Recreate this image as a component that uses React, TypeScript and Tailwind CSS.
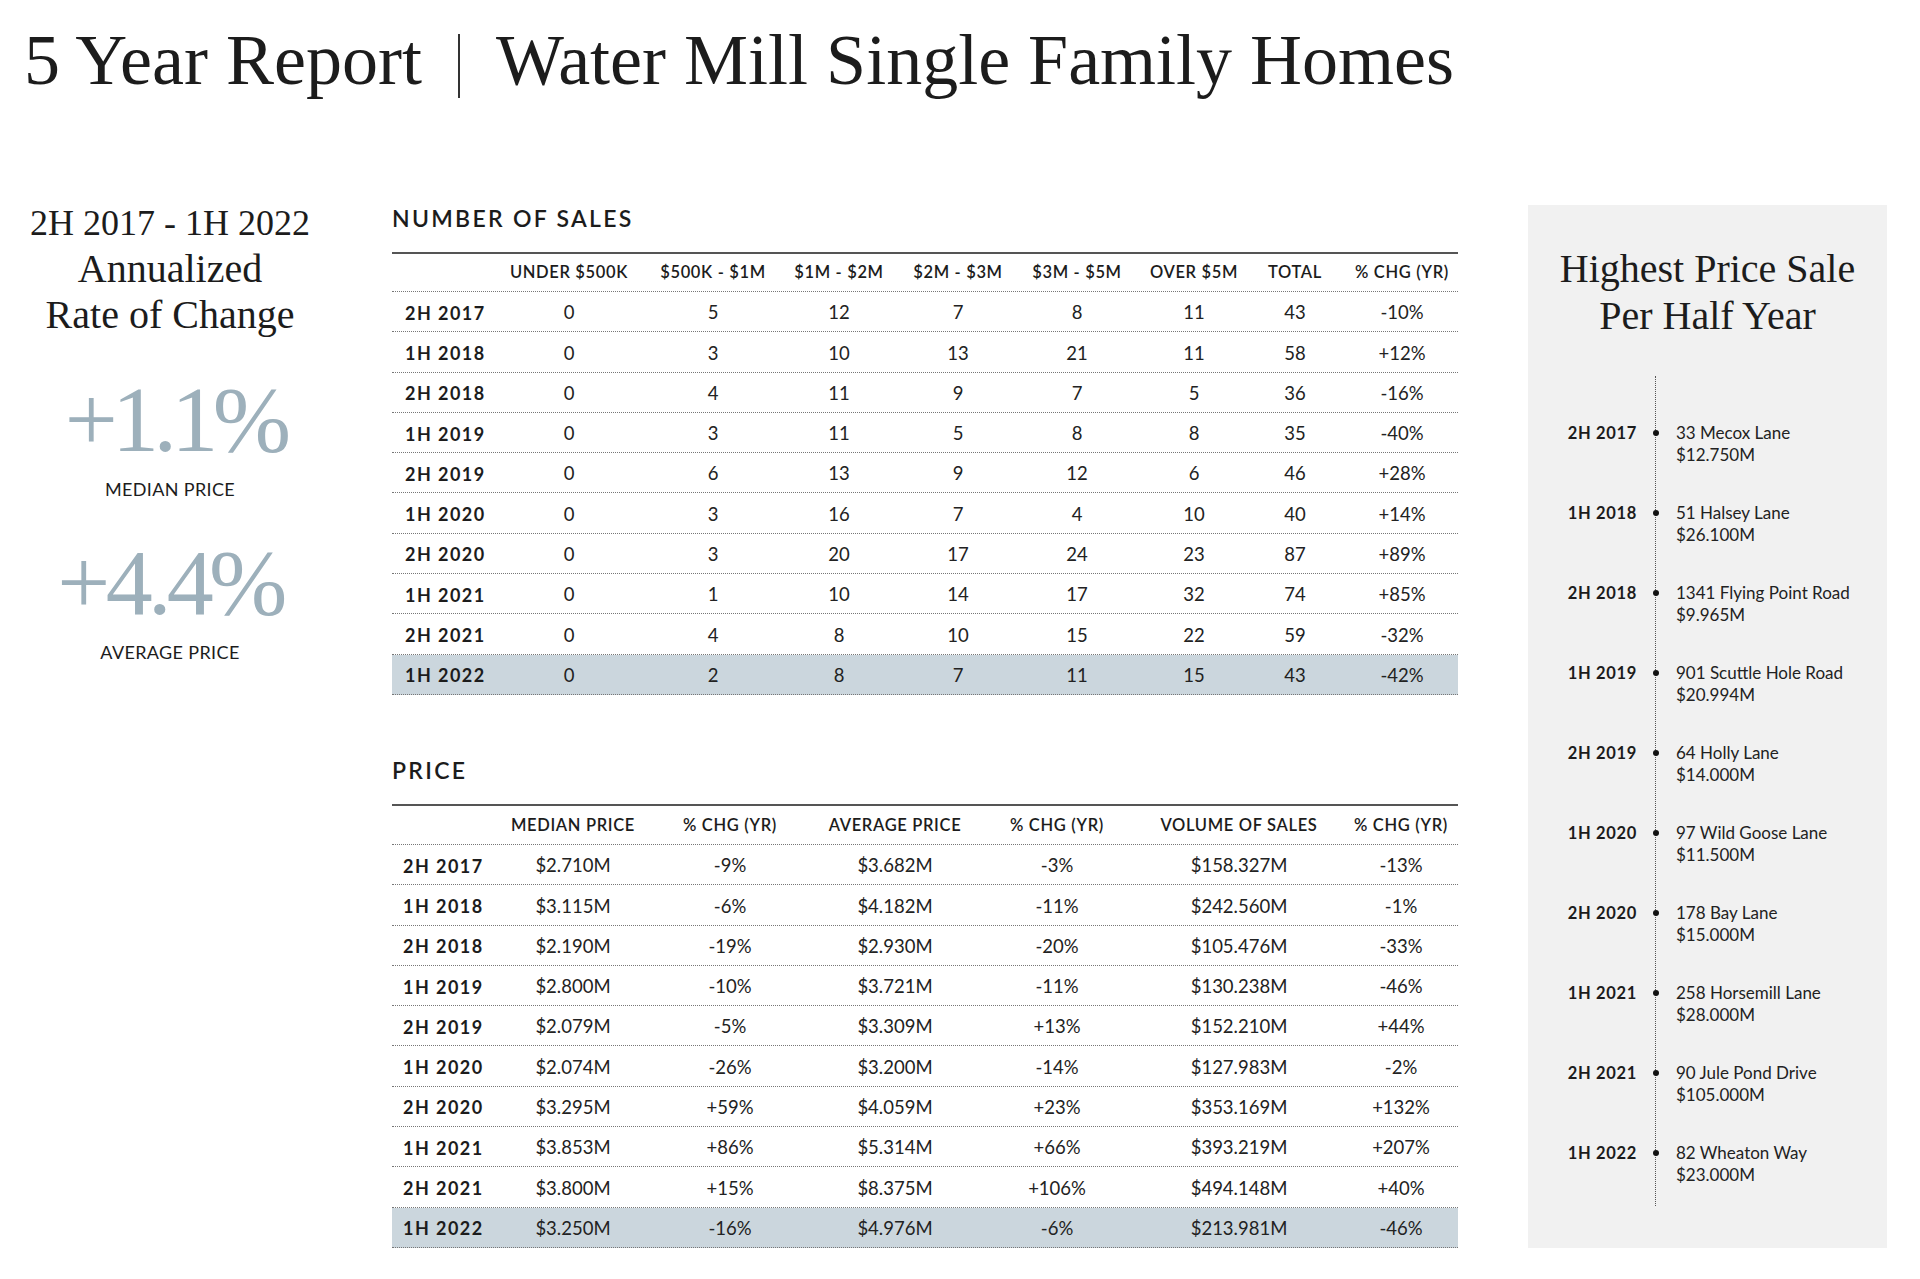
import React from "react";

const serif = "font-['Liberation_Serif',serif]";
const sans = "font-['Lato','Noto_Sans',sans-serif]";

const salesHeaders = [
  "UNDER $500K",
  "$500K - $1M",
  "$1M - $2M",
  "$2M - $3M",
  "$3M - $5M",
  "OVER $5M",
  "TOTAL",
  "% CHG (YR)",
];

const sales: [string, ...string[]][] = [
  ["2H 2017", "0", "5", "12", "7", "8", "11", "43", "-10%"],
  ["1H 2018", "0", "3", "10", "13", "21", "11", "58", "+12%"],
  ["2H 2018", "0", "4", "11", "9", "7", "5", "36", "-16%"],
  ["1H 2019", "0", "3", "11", "5", "8", "8", "35", "-40%"],
  ["2H 2019", "0", "6", "13", "9", "12", "6", "46", "+28%"],
  ["1H 2020", "0", "3", "16", "7", "4", "10", "40", "+14%"],
  ["2H 2020", "0", "3", "20", "17", "24", "23", "87", "+89%"],
  ["1H 2021", "0", "1", "10", "14", "17", "32", "74", "+85%"],
  ["2H 2021", "0", "4", "8", "10", "15", "22", "59", "-32%"],
  ["1H 2022", "0", "2", "8", "7", "11", "15", "43", "-42%"],
];

const priceHeaders = [
  "MEDIAN PRICE",
  "% CHG (YR)",
  "AVERAGE PRICE",
  "% CHG (YR)",
  "VOLUME OF SALES",
  "% CHG (YR)",
];

const prices: [string, ...string[]][] = [
  ["2H 2017", "$2.710M", "-9%", "$3.682M", "-3%", "$158.327M", "-13%"],
  ["1H 2018", "$3.115M", "-6%", "$4.182M", "-11%", "$242.560M", "-1%"],
  ["2H 2018", "$2.190M", "-19%", "$2.930M", "-20%", "$105.476M", "-33%"],
  ["1H 2019", "$2.800M", "-10%", "$3.721M", "-11%", "$130.238M", "-46%"],
  ["2H 2019", "$2.079M", "-5%", "$3.309M", "+13%", "$152.210M", "+44%"],
  ["1H 2020", "$2.074M", "-26%", "$3.200M", "-14%", "$127.983M", "-2%"],
  ["2H 2020", "$3.295M", "+59%", "$4.059M", "+23%", "$353.169M", "+132%"],
  ["1H 2021", "$3.853M", "+86%", "$5.314M", "+66%", "$393.219M", "+207%"],
  ["2H 2021", "$3.800M", "+15%", "$8.375M", "+106%", "$494.148M", "+40%"],
  ["1H 2022", "$3.250M", "-16%", "$4.976M", "-6%", "$213.981M", "-46%"],
];

const topSales = [
  { period: "2H 2017", address: "33 Mecox Lane", price: "$12.750M" },
  { period: "1H 2018", address: "51 Halsey Lane", price: "$26.100M" },
  { period: "2H 2018", address: "1341 Flying Point Road", price: "$9.965M" },
  { period: "1H 2019", address: "901 Scuttle Hole Road", price: "$20.994M" },
  { period: "2H 2019", address: "64 Holly Lane", price: "$14.000M" },
  { period: "1H 2020", address: "97 Wild Goose Lane", price: "$11.500M" },
  { period: "2H 2020", address: "178 Bay Lane", price: "$15.000M" },
  { period: "1H 2021", address: "258 Horsemill Lane", price: "$28.000M" },
  { period: "2H 2021", address: "90 Jule Pond Drive", price: "$105.000M" },
  { period: "1H 2022", address: "82 Wheaton Way", price: "$23.000M" },
];

export default function App() {
  return (
    <div className={`h-[1279px] w-[1920px] overflow-hidden bg-white text-[#1c1c1c] ${sans}`}>
      <Title />
      <div className="mt-[104px] flex items-start">
        <RateOfChange />
        <div className="ml-[52px] flex w-[1066px] flex-col">
          <Section title="NUMBER OF SALES">
            <StatTable
              cols="grid-cols-[92px_170px_118px_134px_104px_134px_100px_102px_112px]"
              headerHeight="h-[38px]"
              labelPad="pl-[13px]"
              headers={salesHeaders}
              rows={sales}
            />
          </Section>
          <div className="mt-[57px]">
            <Section title="PRICE">
              <StatTable
                cols="grid-cols-[104px_154px_160px_170px_154px_210px_114px]"
                headerHeight="h-[39px]"
                labelPad="pl-[11px]"
                headers={priceHeaders}
                rows={prices}
              />
            </Section>
          </div>
        </div>
        <HighestSales />
      </div>
    </div>
  );
}

const Title = () => (
  <h1
    className={`ml-[24px] mt-[24px] flex h-[72px] items-center text-[72px] leading-none whitespace-nowrap ${serif}`}>
    <span>5 Year Report</span>
    <span className="mx-[36px] inline-block h-[64px] w-[2px] translate-y-[6px] bg-[#333]" />
    <span>Water Mill Single Family Homes</span>
  </h1>
);

const RateOfChange = () => (
  <div className="flex w-[340px] flex-col items-center">
    <div className={`text-center leading-[46px] text-[#1c1c1c] ${serif}`}>
      <div className="text-[36px]">2H 2017 - 1H 2022</div>
      <div className="text-[40px]">Annualized</div>
      <div className="text-[40px]">Rate of Change</div>
    </div>
    <div
      className={`mt-[36px] pl-[10px] text-[94px] leading-[90px] tracking-[-0.06em] text-[#9db0bb] ${serif}`}>
      +1.1%
    </div>
    <div className="mt-[12px] text-[18px] tracking-[0.02em] text-[#1c1c1c]">
      MEDIAN PRICE
    </div>
    <div
      className={`mt-[34px] text-[94px] leading-[90px] tracking-[-0.05em] text-[#9db0bb] ${serif}`}>
      +4.4%
    </div>
    <div className="mt-[12px] text-[18px] tracking-[0.02em] text-[#1c1c1c]">
      AVERAGE PRICE
    </div>
  </div>
);

const Section = ({
  title,
  children,
}: {
  title: string;
  children: React.ReactNode;
}) => (
  <div className="flex flex-col">
    <h2 className="mb-[20px] mt-[4px] h-[28px] text-[23px] leading-[28px] font-semibold tracking-[0.1em] text-[#1c1c1c]">
      {title}
    </h2>
    {children}
  </div>
);

const StatTable = ({
  cols,
  headerHeight,
  labelPad,
  headers,
  rows,
}: {
  cols: string;
  headerHeight: string;
  labelPad: string;
  headers: string[];
  rows: [string, ...string[]][];
}) => (
  <div className="border-t-2 border-[#555]">
    <div
      className={`grid ${cols} ${headerHeight} items-center border-b border-dotted border-[#777] text-[16.5px] font-semibold tracking-[0.04em]`}>
      <div />
      {headers.map((h, i) => (
        <div key={i} className="text-center whitespace-nowrap">
          {h}
        </div>
      ))}
    </div>
    {rows.map((row, r) => {
      const [label, ...values] = row;
      const last = r === rows.length - 1;
      return (
        <div
          key={label}
          className={`grid ${cols} h-[40.3px] items-center border-b border-dotted border-[#777] pt-[3px] text-[18.5px] ${last ? "bg-[#cbd6dd]" : ""}`}>
          <div className={`${labelPad} text-[18px] font-bold tracking-[0.08em] whitespace-nowrap`}>
            {label}
          </div>
          {values.map((v, i) => (
            <div key={i} className="text-center text-[#222]">
              {v}
            </div>
          ))}
        </div>
      );
    })}
  </div>
);

const HighestSales = () => (
  <div className="ml-[70px] mt-[5px] flex h-[1043px] w-[359px] flex-col bg-[#f1f1f1] pt-[40px]">
    <div className={`text-center text-[40px] leading-[47px] text-[#1c1c1c] ${serif}`}>
      <div>Highest Price Sale</div>
      <div>Per Half Year</div>
    </div>
    <div className="relative mt-[37px] flex flex-col gap-[36px] pb-[20px] pt-[46px]">
      <div className="absolute bottom-0 left-[127px] top-0 border-l border-dotted border-[#555]" />
      {topSales.map((s) => (
        <div key={s.period} className="flex h-[44px] items-start leading-[22px]">
          <div className="w-[109px] text-right text-[16.5px] font-bold tracking-[0.04em]">
            {s.period}
          </div>
          <div className="flex h-[22px] w-[37px] items-center justify-center">
            <span className="relative h-[6px] w-[6px] rounded-full bg-[#111]" />
          </div>
          <div className="ml-[2px] flex flex-col text-[17px] text-[#222]">
            <span>{s.address}</span>
            <span>{s.price}</span>
          </div>
        </div>
      ))}
    </div>
  </div>
);
